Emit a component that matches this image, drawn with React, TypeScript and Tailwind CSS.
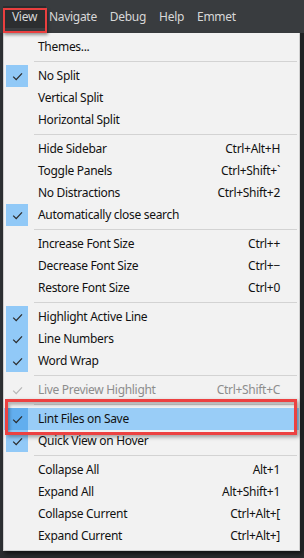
import React from "react";

type Item =
  | { kind: "sep" }
  | { kind: "item"; label: string; keys?: string; checked?: boolean; disabled?: boolean; active?: boolean };

const sep: Item = { kind: "sep" };

const ITEMS: Item[] = [
  { kind: "item", label: "Themes..." },
  sep,
  { kind: "item", label: "No Split", checked: true },
  { kind: "item", label: "Vertical Split" },
  { kind: "item", label: "Horizontal Split" },
  sep,
  { kind: "item", label: "Hide Sidebar", keys: "Ctrl+Alt+H" },
  { kind: "item", label: "Toggle Panels", keys: "Ctrl+Shift+`" },
  { kind: "item", label: "No Distractions", keys: "Ctrl+Shift+2" },
  { kind: "item", label: "Automatically close search", checked: true },
  sep,
  { kind: "item", label: "Increase Font Size", keys: "Ctrl++" },
  { kind: "item", label: "Decrease Font Size", keys: "Ctrl+\u2212" },
  { kind: "item", label: "Restore Font Size", keys: "Ctrl+0" },
  sep,
  { kind: "item", label: "Highlight Active Line", checked: true },
  { kind: "item", label: "Line Numbers", checked: true },
  { kind: "item", label: "Word Wrap", checked: true },
  sep,
  { kind: "item", label: "Live Preview Highlight", keys: "Ctrl+Shift+C", checked: true, disabled: true },
  sep,
  { kind: "item", label: "Lint Files on Save", checked: true, active: true },
  { kind: "item", label: "Quick View on Hover", checked: true },
  sep,
  { kind: "item", label: "Collapse All", keys: "Alt+1" },
  { kind: "item", label: "Expand All", keys: "Alt+Shift+1" },
  { kind: "item", label: "Collapse Current", keys: "Ctrl+Alt+[" },
  { kind: "item", label: "Expand Current", keys: "Ctrl+Alt+]" },
];

function Check({ color }: { color: string }) {
  return (
    <svg width="11" height="9" viewBox="0 0 11 9" fill="none">
      <path d="M1.2 4.6 L4.2 7.6 L10 1.4" stroke={color} strokeWidth="1.3" />
    </svg>
  );
}

function MenuRow({ item }: { item: Extract<Item, { kind: "item" }> }) {
  const checkBg = item.checked && !item.disabled ? (item.active ? "bg-[#62aeee]" : "bg-[#91c9f7]") : "";
  const text = item.disabled ? "text-[#8d8d8d]" : "text-[#111]";
  return (
    <div className={`flex h-[22px] items-center ${item.active ? "bg-[#99cdf7]" : ""}`}>
      <div className={`ml-[2px] flex h-full w-[22px] items-center justify-center ${checkBg}`}>
        {item.checked && <Check color={item.disabled ? "#b8b8b8" : "#2b2b2b"} />}
      </div>
      <span className={`ml-[10px] flex-1 ${text}`}>{item.label}</span>
      {item.keys && <span className={`pr-[19px] ${text}`}>{item.keys}</span>}
    </div>
  );
}

export default function App() {
  return (
    <div className="relative h-[558px] w-[304px] overflow-hidden bg-[#2a2c2e] font-['Noto_Sans',sans-serif] text-[12px] tracking-[-0.3px]">
      <div className="flex h-[33px] items-center bg-[#393c3f] pl-[3px] text-[#d8d8d8]">
        <div className="flex h-[22px] w-[43px] items-center justify-center bg-[#2c2e30]">View</div>
        <div className="ml-[3px] flex gap-[13px]">
          <span>Navigate</span>
          <span>Debug</span>
          <span>Help</span>
          <span>Emmet</span>
        </div>
      </div>

      <div className="flex">
        <div className="w-[3px] bg-[#2e3134]" />
        <div className="w-[297px] border border-t-0 border-[#cfcfcf] bg-[#f2f2f2] py-[3px] shadow-[2px_3px_4px_rgba(0,0,0,0.55)]">
          {ITEMS.map((item, i) =>
            item.kind === "sep" ? (
              <div key={i} className="flex h-[7px] items-center pl-[30px] pr-[2px]">
                <div className="h-[1px] w-full bg-[#d3d3d3]" />
              </div>
            ) : (
              <MenuRow key={i} item={item} />
            ),
          )}
        </div>
        <div className="flex-1 bg-[#1f2123]" />
      </div>

      <div className="pointer-events-none absolute left-[3px] top-[8px] h-[25px] w-[44px] border-2 border-[#ea3f3f] shadow-[1px_2px_3px_rgba(0,0,0,0.4)]" />
      <div className="pointer-events-none absolute left-[5px] top-[399px] h-[36px] w-[292px] border-[3px] border-[#ec4141] shadow-[2px_2px_4px_rgba(0,0,0,0.35),inset_2px_3px_3px_rgba(0,0,0,0.25)]" />
    </div>
  );
}
